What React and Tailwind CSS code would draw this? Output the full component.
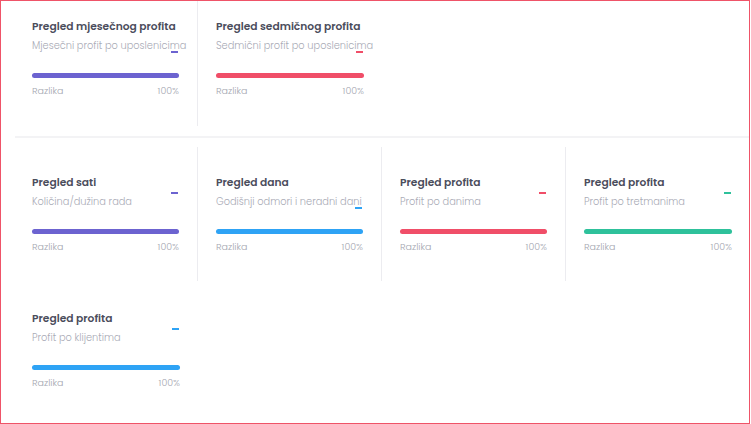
import React from "react";

const COLORS = {
  purple: "bg-[#6c63d0]",
  red: "bg-[#f04e68]",
  blue: "bg-[#2ea3f5]",
  green: "bg-[#2ec19b]",
};

function Card({ title, subtitle, color, dashTop, pt, h, border }) {
  return (
    <div
      className={`relative w-[184px] shrink-0 px-[18px] ${border ? "border-r border-[#ececf0]" : ""}`}
      style={{ paddingTop: pt, height: h }}
    >
      <div className="text-[10.7px] leading-[14px] font-semibold text-[#4b4d5c] whitespace-nowrap">{title}</div>
      <div className="mt-[5px] text-[9.8px] leading-[14px] font-light text-[#a9abb6] whitespace-nowrap">{subtitle}</div>
      <div className={`mt-[20px] h-[5px] rounded-full ${color}`} />
      <div className="mt-[7px] flex justify-between text-[9.5px] leading-[12px] font-light text-[#a4a6b0]">
        <span>Razlika</span>
        <span>100%</span>
      </div>
      <div className={`absolute right-[19px] w-[7px] h-[2px] ${color}`} style={{ top: dashTop }} />
    </div>
  );
}

export default function App() {
  return (
    <div
      className="w-[750px] h-[424px] border border-[#ef5468] bg-white overflow-hidden"
      style={{ fontFamily: "Poppins, Inter, 'Noto Sans', sans-serif" }}
    >
      <div className="flex ml-[13px]">
        <Card title="Pregled mjesečnog profita" subtitle="Mjesečni profit po uposlenicima" color={COLORS.purple} dashTop={50} pt={19} h={125} border />
        <Card title="Pregled sedmičnog profita" subtitle="Sedmični profit po uposlenicima" color={COLORS.red} dashTop={50} pt={19} h={125} />
      </div>
      <div className="mt-[10px] ml-[14px] h-[2px] bg-[#f3f3f5]" />
      <div className="flex ml-[13px] mt-[9px]">
        <Card title="Pregled sati" subtitle="Količina/dužina rada" color={COLORS.purple} dashTop={45} pt={29} h={134} border />
        <Card title="Pregled dana" subtitle="Godišnji odmori i neradni dani" color={COLORS.blue} dashTop={60} pt={29} h={134} border />
        <Card title="Pregled profita" subtitle="Profit po danima" color={COLORS.red} dashTop={45} pt={29} h={134} border />
        <Card title="Pregled profita" subtitle="Profit po tretmanima" color={COLORS.green} dashTop={45} pt={29} h={134} />
      </div>
      <div className="flex ml-[13px]">
        <Card title="Pregled profita" subtitle="Profit po klijentima" color={COLORS.blue} dashTop={47} pt={31} h={130} />
      </div>
    </div>
  );
}
